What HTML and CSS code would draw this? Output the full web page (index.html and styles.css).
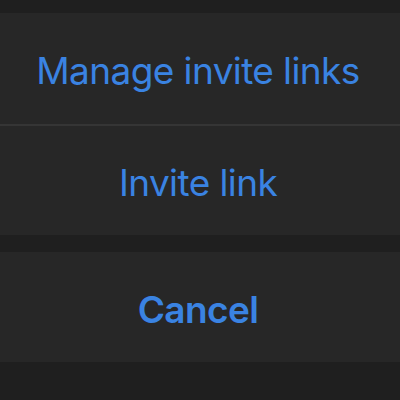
FILE: index.html
```html
<!DOCTYPE html>
<html lang="en">
<head>
    <meta charset="UTF-8">
    <meta name="viewport" content="width=device-width, initial-scale=1.0">
    <title>Invite links</title>
    <link rel="stylesheet" href="styles.css">
</head>
<body>
    <div class="sheet">
        <div class="action-group">
            <a href="#" class="action">Manage invite links</a>
            <a href="#" class="action">Invite link</a>
        </div>
        <div class="action-group">
            <a href="#" class="action action-cancel">Cancel</a>
        </div>
    </div>
</body>
</html>
```

FILE: styles.css
```css
* {
    margin: 0;
    padding: 0;
    box-sizing: border-box;
}

body {
    font-family: Inter, "Liberation Sans", sans-serif;
    background: #1f1f1f;
    color: #3a83e2;
    height: 400px;
    overflow: hidden;
}

.sheet {
    display: flex;
    flex-direction: column;
    gap: 17px;
    padding-top: 13px;
}

.action-group {
    background: #272727;
    display: flex;
    flex-direction: column;
}

.action {
    display: flex;
    align-items: center;
    justify-content: center;
    height: 111px;
    padding: 4px 4px 0 0;
    color: #3a83e2;
    text-decoration: none;
    font-size: 37px;
    letter-spacing: -0.6px;
}

.action + .action {
    border-top: 2px solid #353535;
}

.action-cancel {
    height: 110px;
    font-weight: 600;
}
```
